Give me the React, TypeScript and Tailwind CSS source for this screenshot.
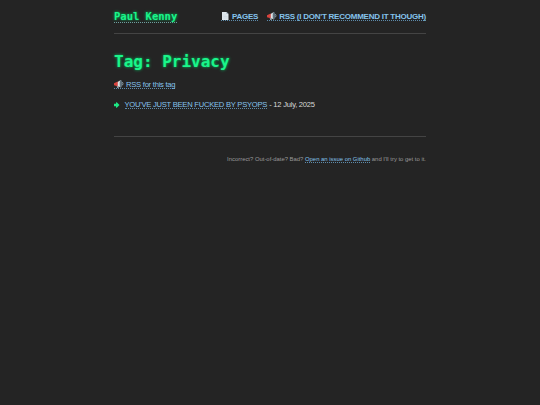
import type { ReactNode } from "react";

const posts = [
  { title: "YOU'VE JUST BEEN FUCKED BY PSYOPS", date: "12 July, 2025" },
];

function DottedLink({ children, className = "" }: { children: ReactNode; className?: string }) {
  return (
    <a
      href="#"
      className={`inline-flex items-end whitespace-nowrap border-b border-dotted border-[#5d8bab] leading-[6px] text-[#85c3ec] ${className}`}
    >
      {children}
    </a>
  );
}

function PageIcon() {
  return (
    <svg viewBox="0 0 16 16" className="mr-[2px] h-2 w-[9px] shrink-0">
      <path d="M1 0h9l4 4v12H1z" fill="#dfe7ec" />
      <path d="M10 0v4h4z" fill="#9fb0bb" />
      <path d="M4 6h5M4 9h8M4 12h8" stroke="#c5d3dc" />
    </svg>
  );
}

function MegaphoneIcon() {
  return (
    <svg viewBox="0 0 18 16" className="mr-[2.5px] h-[8.5px] w-[9.5px] shrink-0">
      <path d="M5 10l4 1v4H6z" fill="#8c9ba4" />
      <path d="M6 4l7-4v14l-7-3z" fill="#dce3e5" />
      <path d="M0 6l7-3v9l-7-2z" fill="#d9433d" />
      <ellipse cx="13" cy="7" rx="2.2" ry="7" fill="#60727d" />
      <path d="M16 4q2 3 0 6" fill="none" stroke="#a8b9c3" strokeWidth="1.5" />
    </svg>
  );
}

function ArrowIcon() {
  return (
    <svg viewBox="0 0 12 12" className="h-1.5 w-1.5 shrink-0">
      <path d="M0 3.5h4V1q1-1 2 0l5 5-5 5q-1 1-2 0V8.5H0z" fill="#1de884" />
    </svg>
  );
}

export default function App() {
  return (
    <div className="min-h-screen bg-[#242424] font-['Liberation_Sans',Arial,sans-serif] text-[7.6px] leading-[8px] tracking-[-0.24px] text-[#d8d8d8]">
      <div className="mx-auto w-[312px]">
        <header className="flex h-[34px] items-start justify-between border-b border-[#444] pt-[11px]">
          <a
            href="#"
            className="h-[12px] whitespace-nowrap border-b border-dotted border-[#6f9fa0] font-['DejaVu_Sans_Mono',monospace] text-[10.5px] font-bold leading-[11px] tracking-normal text-[#1af58a] [text-shadow:0_0_3px_#00c864]"
          >
            Paul Kenny
          </a>
          <nav className="flex gap-[9px] pt-px text-[8px] font-bold tracking-[-0.24px]">
            <DottedLink className="h-[9px]">
              <PageIcon />
              PAGES
            </DottedLink>
            <DottedLink className="h-[9px]">
              <MegaphoneIcon />
              RSS (I DON'T RECOMMEND IT THOUGH)
            </DottedLink>
          </nav>
        </header>

        <main className="h-[103px] border-b border-[#444] pt-[18px]">
          <h1 className="font-['DejaVu_Sans_Mono',monospace] text-base font-bold leading-[19px] tracking-normal text-[#1af58a] [text-shadow:0_0_3px_#00c864]">
            Tag: Privacy
          </h1>
          <div className="mt-[9px] flex">
            <DottedLink className="h-[9px]">
              <MegaphoneIcon />
              RSS for this tag
            </DottedLink>
          </div>
          <ul className="mt-[11px]">
            {posts.map((post) => (
              <li key={post.title} className="flex h-[9px] items-center whitespace-nowrap">
                <ArrowIcon />
                <DottedLink className="ml-[4.5px] h-[9px]">{post.title}</DottedLink>
                <span className="ml-[2px]">- {post.date}</span>
              </li>
            ))}
          </ul>
        </main>

        <footer className="flex items-center justify-end whitespace-pre pt-[18px] text-[5.9px] tracking-normal text-[#999]">
          Incorrect? Out-of-date? Bad?{" "}
          <DottedLink className="h-[8px]">Open an issue on Github</DottedLink>
          {" and I'll try to get to it."}
        </footer>
      </div>
    </div>
  );
}
